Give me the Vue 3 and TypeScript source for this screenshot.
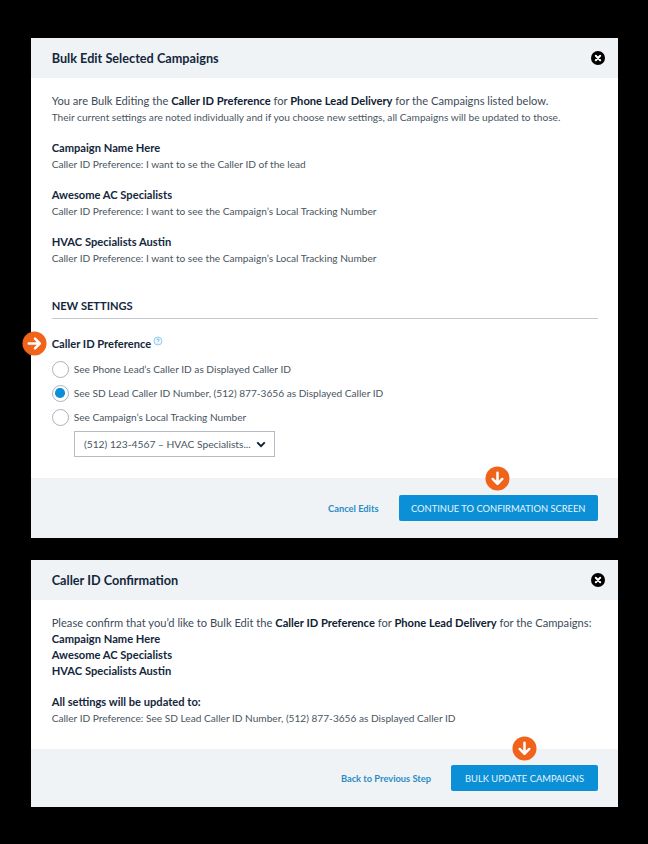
<script setup lang="ts">
const campaigns = [
  { name: 'Campaign Name Here', pref: 'I want to se the Caller ID of the lead' },
  { name: 'Awesome AC Specialists', pref: 'I want to see the Campaign’s Local Tracking Number' },
  { name: 'HVAC Specialists Austin', pref: 'I want to see the Campaign’s Local Tracking Number' },
]
const options = [
  { label: 'See Phone Lead’s Caller ID as Displayed Caller ID', on: false },
  { label: 'See SD Lead Caller ID Number, (512) 877-3656 as Displayed Caller ID', on: true },
  { label: 'See Campaign’s Local Tracking Number', on: false },
]
</script>

<template>
  <div class="page">
    <section class="modal">
      <header class="head">
        <h2>Bulk Edit Selected Campaigns</h2>
        <svg class="close" viewBox="0 0 16 16"><circle cx="8" cy="8" r="7" fill="#000" /><path d="M5.8 5.8l4.4 4.4M10.2 5.8l-4.4 4.4" stroke="#fff" stroke-width="2" stroke-linecap="round" /></svg>
      </header>
      <div class="body first">
        <p class="lead">You are Bulk Editing the <b>Caller ID Preference</b> for <b>Phone Lead Delivery</b> for the Campaigns listed below.</p>
        <p class="small">Their current settings are noted individually and if you choose new settings, all Campaigns will be updated to those.</p>
        <div class="camps">
          <div v-for="c in campaigns" :key="c.name" class="camp">
            <div class="name">{{ c.name }}</div>
            <div class="small">Caller ID Preference: {{ c.pref }}</div>
          </div>
        </div>
        <h3 class="section">NEW SETTINGS</h3>
        <div class="pref">
          <svg class="badge side" viewBox="0 0 26 26"><circle cx="13" cy="13" r="12.5" fill="#f0631b" /><path d="M7 13h11M13.5 8l5 5-5 5" fill="none" stroke="#fff" stroke-width="2.6" stroke-linecap="round" stroke-linejoin="round" /></svg>
          <span class="name">Caller ID Preference</span>
          <svg class="help" viewBox="0 0 10 10"><circle cx="5" cy="5" r="4" fill="#eef7fc" stroke="#7cc1e6" stroke-width="0.8" /><path d="M3.8 4c0-1.5 2.4-1.5 2.4 0 0 .9-1.2.9-1.2 1.8M5 7v.4" fill="none" stroke="#4da6d8" stroke-width="0.7" /></svg>
        </div>
        <div class="radios">
          <label v-for="o in options" :key="o.label" class="radio">
            <span class="dot"><i v-if="o.on"></i></span>
            <span class="small">{{ o.label }}</span>
          </label>
        </div>
        <div class="select">
          <span>(512) 123-4567 – HVAC Specialists...</span>
          <svg viewBox="0 0 12 8"><path d="M1.5 1.5L6 6l4.5-4.5" fill="none" stroke="#0f2133" stroke-width="2.4" /></svg>
        </div>
      </div>
      <footer class="foot first-foot">
        <a>Cancel Edits</a>
        <div class="btn wide">
          <svg class="badge top" viewBox="0 0 26 26"><circle cx="13" cy="13" r="12.5" fill="#f0631b" /><path d="M13 7v11M8 13.5l5 5 5-5" fill="none" stroke="#fff" stroke-width="2.6" stroke-linecap="round" stroke-linejoin="round" /></svg>
          CONTINUE TO CONFIRMATION SCREEN
        </div>
      </footer>
    </section>

    <section class="modal">
      <header class="head">
        <h2>Caller ID Confirmation</h2>
        <svg class="close" viewBox="0 0 16 16"><circle cx="8" cy="8" r="7" fill="#000" /><path d="M5.8 5.8l4.4 4.4M10.2 5.8l-4.4 4.4" stroke="#fff" stroke-width="2" stroke-linecap="round" /></svg>
      </header>
      <div class="body second">
        <p class="lead">Please confirm that you’d like to Bulk Edit the <b>Caller ID Preference</b> for <b>Phone Lead Delivery</b> for the Campaigns:</p>
        <div v-for="c in campaigns" :key="c.name" class="name tall">{{ c.name }}</div>
        <div class="name tall gap">All settings will be updated to:</div>
        <p class="small">Caller ID Preference: See SD Lead Caller ID Number, (512) 877-3656 as Displayed Caller ID</p>
      </div>
      <footer class="foot second-foot">
        <a>Back to Previous Step</a>
        <div class="btn">
          <svg class="badge top" viewBox="0 0 26 26"><circle cx="13" cy="13" r="12.5" fill="#f0631b" /><path d="M13 7v11M8 13.5l5 5 5-5" fill="none" stroke="#fff" stroke-width="2.6" stroke-linecap="round" stroke-linejoin="round" /></svg>
          BULK UPDATE CAMPAIGNS
        </div>
      </footer>
    </section>
  </div>
</template>

<style>
html, body { background: #000; margin: 0; }
</style>

<style scoped>
.page {
  width: 648px;
  height: 844px;
  box-sizing: border-box;
  padding: 38px 30px 0 31px;
  background: #000;
  display: flex;
  flex-direction: column;
  gap: 22px;
  font-family: Lato, sans-serif;
  color: #0f2133;
  overflow: hidden;
}
.modal { background: #fff; display: flex; flex-direction: column; }
.head {
  height: 40px;
  background: #eff3f6;
  display: flex;
  align-items: center;
  justify-content: space-between;
  padding: 0 12px 0 20.7px;
}
h2 { margin: 0 0 1px; font-size: 12.7px; font-weight: 700; color: #14273c; }
.close { width: 16px; height: 16px; }
.body { padding: 0 20px 0 20.7px; }
.first { height: 400px; padding-top: 15px; box-sizing: border-box; }
.second { height: 149px; padding-top: 15px; box-sizing: border-box; }
p { margin: 0; }
.lead { font-size: 11.15px; line-height: 16px; color: #3d4a58; white-space: nowrap; }
.lead b { color: #0f2133; }
.small { font-size: 10.15px; line-height: 16px; color: #4a5561; white-space: nowrap; }
.name { font-size: 11.15px; font-weight: 700; line-height: 16px; color: #14273c; }
.tall { line-height: 15.8px; }
.gap { margin-top: 16px; }
.camps { margin-top: 15px; display: flex; flex-direction: column; gap: 15px; }
.section {
  margin: 32px 0 0;
  font-size: 11.1px;
  font-weight: 700;
  line-height: 16px;
  color: #14273c;
  padding-bottom: 4px;
  border-bottom: 1px solid #c4c9cf;
}
.pref { margin-top: 17px; display: flex; position: relative; }
.help { width: 10px; height: 10px; margin-left: 2px; }
.badge { position: absolute; width: 25px; height: 25px; }
.side { left: -30px; top: -5px; }
.radios { margin-top: 7px; display: flex; flex-direction: column; gap: 4px; }
.radio { display: flex; align-items: center; gap: 5px; height: 20px; }
.dot {
  width: 15px;
  height: 15px;
  border-radius: 50%;
  border: 1px solid #aab2bb;
  background: #fff;
  display: flex;
  align-items: center;
  justify-content: center;
  box-sizing: content-box;
}
.dot i { width: 9.5px; height: 9.5px; border-radius: 50%; background: #0b8fd6; }
.select {
  margin: 4px 0 0 22.3px;
  width: 201px;
  height: 26px;
  box-sizing: border-box;
  border: 1px solid #b4bbc3;
  padding: 0 8px 0 9px;
  display: flex;
  align-items: center;
  justify-content: space-between;
  font-size: 10.25px;
  color: #4a5561;
  white-space: nowrap;
}
.select svg { width: 10px; height: 7px; }
.foot {
  background: #eff3f6;
  display: flex;
  align-items: center;
  justify-content: flex-end;
  padding: 0 20px 0 0;
  gap: 20px;
}
.first-foot { height: 60px; }
.second-foot { height: 58px; }
.foot a { font-size: 9.3px; font-weight: 700; color: #2a8cc4; }
.btn {
  position: relative;
  height: 26px;
  width: 147px;
  background: #0b8fd6;
  border-radius: 2px;
  color: #e8f5fc;
  font-size: 9.35px;
  display: flex;
  align-items: center;
  justify-content: center;
}
.wide { width: 199.5px; }
.top { left: 50%; margin-left: -13px; top: -29px; }
</style>
